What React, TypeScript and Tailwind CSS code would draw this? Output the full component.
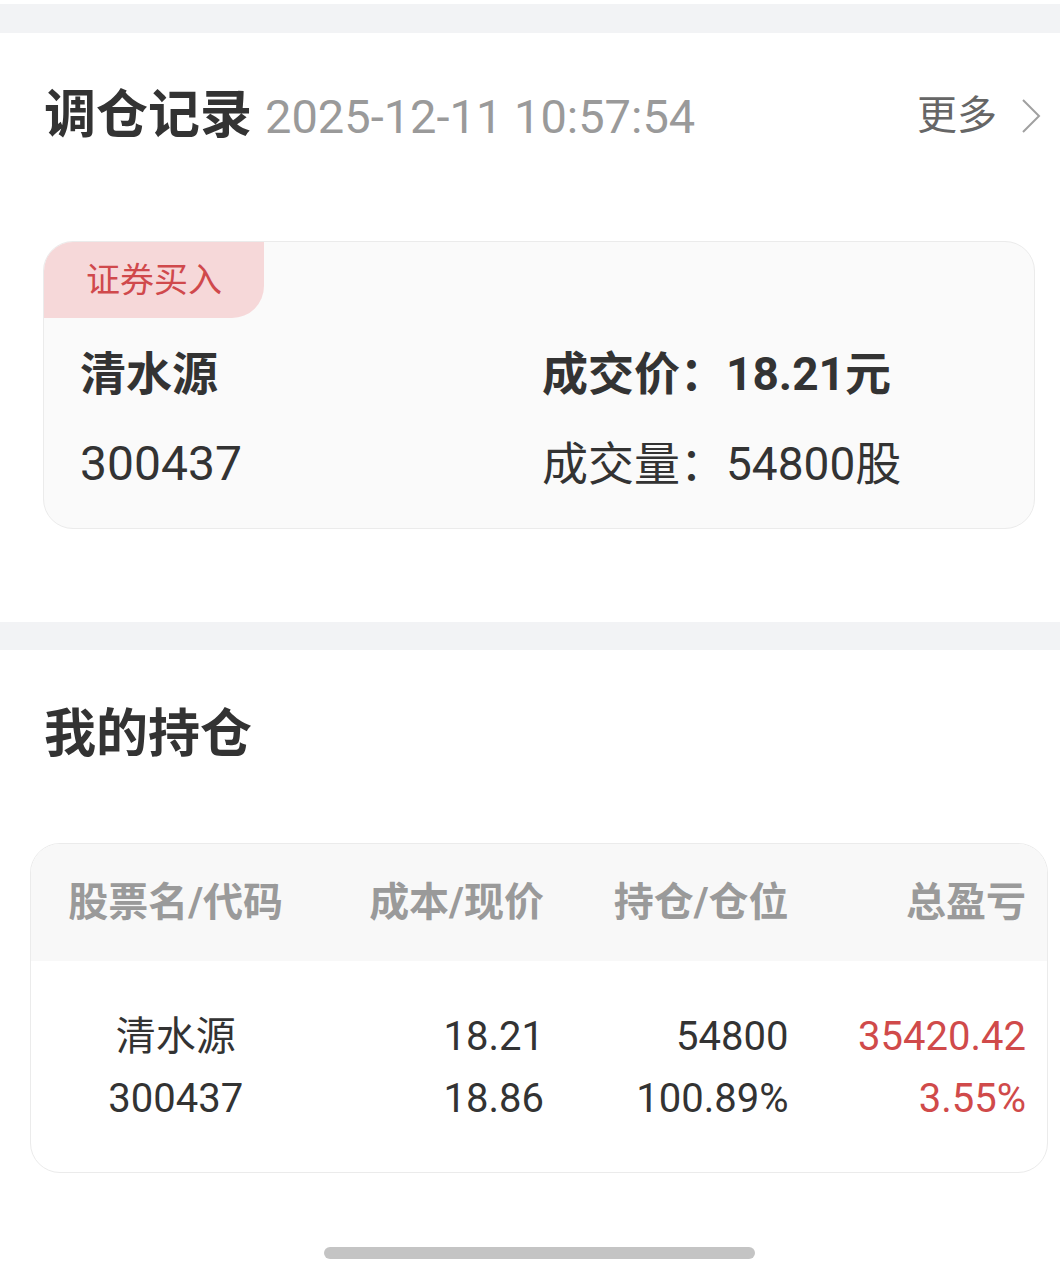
import React from "react";

export default function App() {
  return (
    <div className="w-[1060px] h-[1276px] bg-white overflow-hidden font-[Roboto,'Noto_Sans_CJK_SC',sans-serif] text-[#333]">
      <div className="h-[4px]" />
      <div className="h-[29px] bg-[#f2f3f5]" />

      {/* 调仓记录 header */}
      <div className="mt-[53px] h-[60px] flex items-center justify-between pl-[44px] pr-[19px]">
        <div className="flex items-center">
          <span className="text-[52px] font-bold leading-none text-[#333]">调仓记录</span>
          <span className="ml-[13px] text-[47px] leading-none text-[#9a9a9a]">2025-12-11 10:57:54</span>
        </div>
        <div className="flex items-center">
          <span className="text-[40px] leading-none text-[#666]">更多</span>
          <svg className="ml-[24px]" width="20" height="34" viewBox="0 0 20 34" fill="none">
            <polyline points="2,1 18,17 2,33" stroke="#a0a0a0" strokeWidth="2" />
          </svg>
        </div>
      </div>

      {/* trade card */}
      <div className="mt-[95px] ml-[43px] mr-[25px] h-[288px] rounded-[30px] border border-[#ebebeb] bg-[#fafafa] overflow-hidden">
        <div className="w-[220px] h-[76px] bg-[#f6d8d9] rounded-br-[32px] flex items-center pl-[42px]">
          <span className="text-[34px] leading-none text-[#d0494c]">证券买入</span>
        </div>
        <div className="flex mt-[26px]">
          <div className="w-[498px] pl-[36px]">
            <div className="h-[60px] flex items-center text-[46px] font-bold leading-none">清水源</div>
            <div className="mt-[30px] h-[60px] flex items-center text-[48px] leading-none">300437</div>
          </div>
          <div>
            <div className="h-[60px] flex items-center text-[46px] font-bold leading-none">成交价：18.21元</div>
            <div className="mt-[30px] h-[60px] flex items-center text-[46px] leading-none">成交量：54800股</div>
          </div>
        </div>
      </div>

      <div className="mt-[93px] h-[28px] bg-[#f2f3f5]" />

      {/* 我的持仓 */}
      <div className="mt-[55px] h-[60px] flex items-center pl-[44px]">
        <span className="text-[52px] font-bold leading-none text-[#333]">我的持仓</span>
      </div>

      {/* holdings table */}
      <div className="mt-[78px] ml-[30px] mr-[12px] rounded-[30px] border border-[#ebebeb] bg-white overflow-hidden">
        <div className="h-[117px] bg-[#f8f8f8] flex items-center pr-[21px] text-[40px] font-bold leading-none text-[#9a9a9a]">
          <div className="w-[290px] text-center">股票名/代码</div>
          <div className="w-[224px] text-right">成本/现价</div>
          <div className="w-[245px] text-right">持仓/仓位</div>
          <div className="w-[238px] text-right">总盈亏</div>
        </div>
        <div className="pt-[45px] pb-[42px] flex pr-[21px] text-[40px] leading-[62px]">
          <div className="w-[290px] text-center">
            <div>清水源</div>
            <div>300437</div>
          </div>
          <div className="w-[224px] text-right">
            <div>18.21</div>
            <div>18.86</div>
          </div>
          <div className="w-[245px] text-right">
            <div>54800</div>
            <div>100.89%</div>
          </div>
          <div className="w-[238px] text-right text-[#d04a4a]">
            <div>35420.42</div>
            <div>3.55%</div>
          </div>
        </div>
      </div>

      <div className="mt-[74px] ml-[324px] w-[431px] h-[12px] rounded-full bg-[#c4c4c4]" />
    </div>
  );
}
